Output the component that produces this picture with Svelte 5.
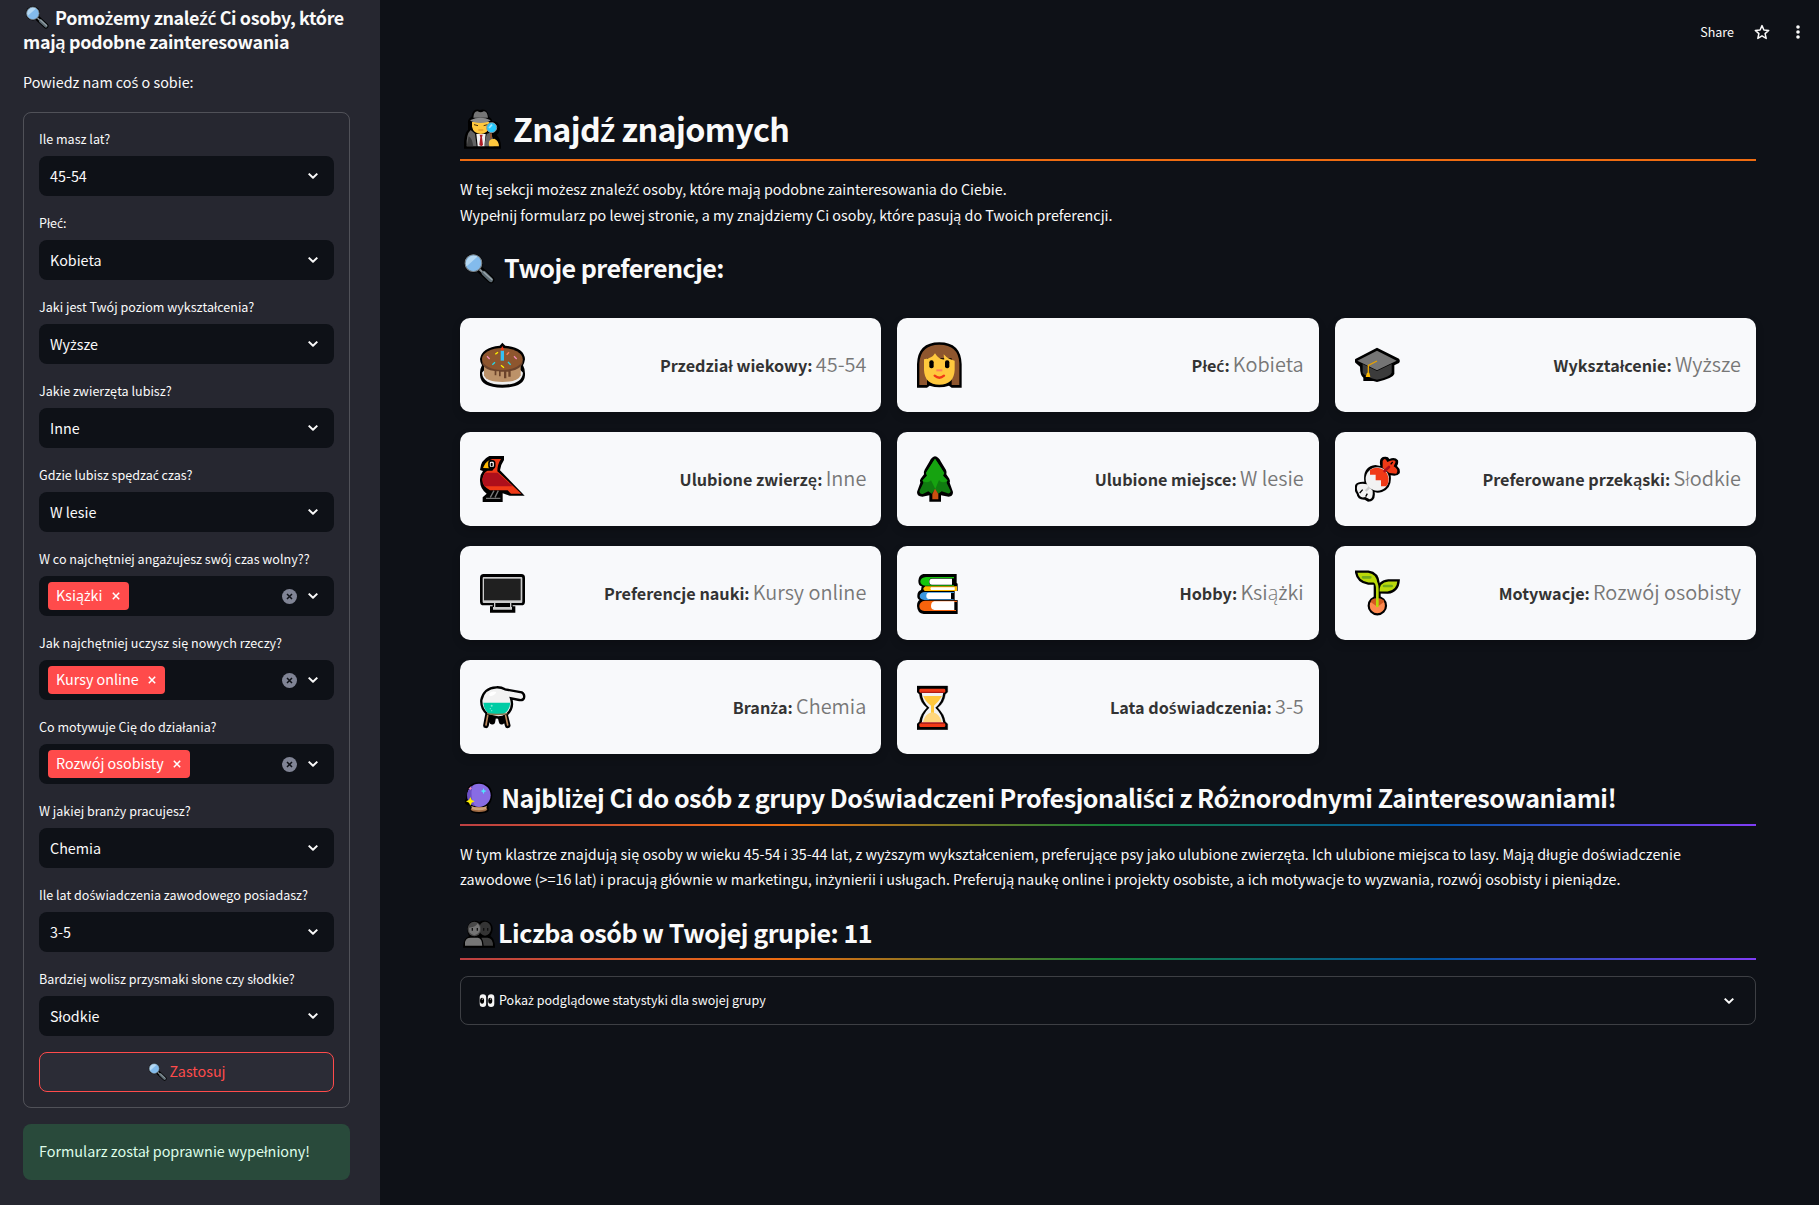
<script>
  const fields = [
    { label: 'Ile masz lat?', value: '45-54' },
    { label: 'Płeć:', value: 'Kobieta' },
    { label: 'Jaki jest Twój poziom wykształcenia?', value: 'Wyższe' },
    { label: 'Jakie zwierzęta lubisz?', value: 'Inne' },
    { label: 'Gdzie lubisz spędzać czas?', value: 'W lesie' },
    { label: 'W co najchętniej angażujesz swój czas wolny??', value: 'Książki', multi: true },
    { label: 'Jak najchętniej uczysz się nowych rzeczy?', value: 'Kursy online', multi: true },
    { label: 'Co motywuje Cię do działania?', value: 'Rozwój osobisty', multi: true },
    { label: 'W jakiej branży pracujesz?', value: 'Chemia' },
    { label: 'Ile lat doświadczenia zawodowego posiadasz?', value: '3-5' },
    { label: 'Bardziej wolisz przysmaki słone czy słodkie?', value: 'Słodkie' },
  ];
  const cards = [
    { icon: 'cake', box: '75 96 138 138', label: 'Przedział wiekowy:', value: '45-54' },
    { icon: 'woman', box: '82 96 138 138', label: 'Płeć:', value: 'Kobieta' },
    { icon: 'cap', box: '90 96 138 138', label: 'Wykształcenie:', value: 'Wyższe' },
    { icon: 'bird', box: '75 438 138 138', label: 'Ulubione zwierzę:', value: 'Inne' },
    { icon: 'tree', box: '82 438 138 138', label: 'Ulubione miejsce:', value: 'W lesie' },
    { icon: 'candy', box: '90 438 138 138', label: 'Preferowane przekąski:', value: 'Słodkie' },
    { icon: 'screen', box: '75 90 138 138', label: 'Preferencje nauki:', value: 'Kursy online' },
    { icon: 'books', box: '82 90 138 138', label: 'Hobby:', value: 'Książki' },
    { icon: 'sprout', box: '90 90 138 138', label: 'Motywacje:', value: 'Rozwój osobisty' },
    { icon: 'flask', box: '75 432 138 138', label: 'Branża:', value: 'Chemia' },
    { icon: 'glass', box: '82 432 138 138', label: 'Lata doświadczenia:', value: '3-5' },
  ];

  // The main family lacks these Polish letters, so they get their own family.
  const split = (text) => text.split(/([śźżćń])/).filter((s) => s !== '');
  const isAccent = (s) => /^[śźżćń]$/.test(s);
</script>

{#snippet pl(text)}<span>{#each split(text) as s}{#if isAccent(s)}<span class="acc">{s}</span>{:else}{s}{/if}{/each}</span>{/snippet}

{#snippet lens(cls)}
  <svg class={cls} viewBox="0 0 92 92">
    <circle cx="30" cy="32" r="27" fill="#000" />
    <path d="M50 52 L80 80" stroke="#000" stroke-width="20" stroke-linecap="round" />
    <path d="M48 50 L60 62" stroke="#8b9297" stroke-width="6" />
    <path d="M60 61 L80 80" stroke="#5c6a72" stroke-width="13" stroke-linecap="round" />
    <path d="M60 58 L83 79" stroke="#9aa5ab" stroke-width="4" stroke-linecap="round" />
    <circle cx="30" cy="32" r="24" fill="#83bbec" />
    <path d="M10 42 A23 23 0 0 1 42 13 Z" fill="#b5d9f4" />
    <circle cx="30" cy="32" r="24" fill="none" stroke="#7d868c" stroke-width="3" />
  </svg>
{/snippet}

{#snippet chevron()}
  <svg class="chev" viewBox="0 0 12 8"><path d="M1.7 1.6 L6 5.8 L10.3 1.6" fill="none" stroke="#fafafa" stroke-width="2" stroke-linejoin="round" /></svg>
{/snippet}

<div class="app">
  <aside>
    <h3>{@render lens('lens small')}{@render pl('Pomożemy znaleźć Ci osoby, które')}<br />mają podobne zainteresowania</h3>
    <p class="intro">{@render pl('Powiedz nam coś o sobie:')}</p>
    <form>
      {#each fields as f}
        <div class="field">
          <span class="label">{@render pl(f.label)}</span>
          <div class="select" class:multi={f.multi}>
            {#if f.multi}
              <span class="tag"><span class="tag-text">{@render pl(f.value)}</span><svg viewBox="0 0 8 8"><path d="M.8 .8 L7.2 7.2 M7.2 .8 L.8 7.2" stroke="#fff" stroke-width="1.5" /></svg></span>
              <svg class="clear" viewBox="0 0 15 15"><circle cx="7.5" cy="7.5" r="7.5" fill="#808495" /><path d="M5 5 L10 10 M10 5 L5 10" stroke="#0e1117" stroke-width="1.5" /></svg>
            {:else}
              <span class="value">{@render pl(f.value)}</span>
            {/if}
            {@render chevron()}
          </div>
        </div>
      {/each}
      <button type="button">{@render lens('lens tiny')}<span class="apply">Zastosuj</span></button>
    </form>
    <div class="alert">{@render pl('Formularz został poprawnie wypełniony!')}</div>
  </aside>

  <main>
    <div class="toolbar">
      <span>Share</span>
      <svg class="star" viewBox="0 0 16 16"><path d="M8 1.6 L9.9 6 L14.7 6.4 L11.1 9.6 L12.2 14.4 L8 11.8 L3.8 14.4 L4.9 9.6 L1.3 6.4 L6.1 6 Z" fill="none" stroke="#fafafa" stroke-width="1.5" stroke-linejoin="round" /></svg>
      <svg class="dots" viewBox="0 0 4 14"><circle cx="2" cy="2" r="1.8" /><circle cx="2" cy="7" r="1.8" /><circle cx="2" cy="12" r="1.8" /></svg>
    </div>

    <h1>
      <svg class="detective" viewBox="42 56 114 124">
        <path d="M56 101 Q54 90 66 84 Q68 58 90 64 Q112 58 115 84 Q126 90 124 98 Q148 96 148 118 Q146 132 137 136 Q152 150 151 176 H44 Q42 136 56 122 Z" fill="#000" stroke="#000" stroke-width="4" />
        <path d="M66 98 H118 V112 Q112 134 92 134 Q70 132 66 112 Z" fill="#ffc83d" />
        <path d="M72 106 l12 3 M113 106 l-12 3" stroke="#422b0d" stroke-width="3" />
        <path d="M85 122 H100" stroke="#e59829" stroke-width="4" />
        <path d="M70 85 Q72 64 83 66 Q92 72 101 66 Q111 64 114 85 Z" fill="#767676" />
        <path d="M60 93 Q92 78 122 93 Q112 101 92 101 Q70 101 60 93" fill="#8a8a8a" />
        <path d="M50 171 Q48 134 62 122 L75 133 L80 171Z" fill="#636363" />
        <path d="M50 171 L56 141 Q66 146 70 171Z" fill="#3a3a3a" />
        <path d="M102 171 L110 134 L119 130 Q132 142 131 171Z" fill="#636363" />
        <path d="M79 134 H107 L103 171 H83 Z" fill="#f1f1f1" />
        <path d="M89 136 H98 L96 144 L99 167 L94 171 L88 167 L91 144Z" fill="#ad1d25" />
        <circle cx="125" cy="115" r="15" fill="#26c9fc" stroke="#8b969c" stroke-width="3" />
        <path d="M117 116 L126 106" stroke="#a5e8ff" stroke-width="5" />
        <path d="M123 132 V148" stroke="#8c5533" stroke-width="6" />
        <path d="M118 171 Q113 154 124 150 L133 148 Q147 155 147 171 Z" fill="#ffc83d" />
      </svg>{@render pl('Znajdź znajomych')}
    </h1>
    <p class="lead">{@render pl('W tej sekcji możesz znaleźć osoby, które mają podobne zainteresowania do Ciebie.')}<br />{@render pl('Wypełnij formularz po lewej stronie, a my znajdziemy Ci osoby, które pasują do Twoich preferencji.')}</p>
    <h2 class="prefs">{@render lens('lens big')}Twoje preferencje:</h2>

    <div class="grid">
      {#each cards as c}
        <div class="card">
          <svg class="icon" viewBox={c.box}>
            {#if c.icon === 'cake'}
              <path d="M142 98 L151 107 Q208 112 210 148 Q208 160 204 166 Q211 178 210 196 Q208 233 142 233 Q77 233 75 196 Q74 178 81 166 Q75 156 75 147 Q80 112 134 107 Z" fill="#000" />
              <path d="M81 188 Q84 224 142 224 Q201 224 204 188 L196 180 H88 Z" fill="#efefef" />
              <path d="M87 166 H197 V196 Q190 216 142 216 Q94 216 87 196Z" fill="#bc9269" />
              <path d="M82 147 V162 Q90 180 119 183 V196 H124 V184 H132 V199 H137 V185 H147 V205 H154 V185 H160 V200 H167 V183 Q196 179 203 160 V147Z" fill="#6b432b" />
              <ellipse cx="142" cy="147" rx="61" ry="33" fill="#8e562e" />
              <path d="M137 122 H147 V152 H137Z" fill="#35c1f1" />
              <path d="M142 108 L147 118 Q142 126 137 118Z" fill="#f03a17" />
              <g stroke-width="4"><path d="M121 133 L129 127 M138 166 L147 173" stroke="#fff100" /><path d="M155 134 L162 127" stroke="#ff8257" /><path d="M96 139 L104 147 M177 139 L185 147" stroke="#f48ab8" /><path d="M112 164 L120 157 M159 156 L167 164" stroke="#27d6e8" /></g>
            {:else if c.icon === 'woman'}
              <path d="M82 233 V163 Q84 97 149 97 Q214 97 216 163 V233 H186 L178 227 Q149 236 120 227 L112 233 Z" fill="#000" />
              <path d="M89 225 V160 Q92 104 149 104 Q207 104 209 160 V225 H186 V145 H112 V225Z" fill="#8e562e" />
              <path d="M103 148 Q128 145 136 130 Q148 150 164 148 Q162 140 162 133 Q176 149 195 152 V180 Q193 224 149 224 Q105 224 103 180Z" fill="#ffc83d" />
              <rect x="119" y="151" width="13" height="24" rx="6" /><rect x="166" y="151" width="13" height="24" rx="6" />
              <path d="M140 181 H158" stroke="#ff8257" stroke-width="6" />
              <path d="M135 197 Q149 209 163 197" fill="none" stroke="#f03a17" stroke-width="7" stroke-linecap="round" />
            {:else if c.icon === 'cap'}
              <path d="M156 113 L222 146 Q227 153 222 159 L208 166 V192 Q205 204 156 216 L145 213 H115 V203 Q105 196 105 170 L91 158 Q87 152 91 147 Z" fill="#000" />
              <path d="M113 162 L156 183 L200 162 V188 Q196 200 156 209 Q120 200 113 188Z" fill="#3b3b3b" />
              <path d="M156 122 L215 152 L156 181 L97 152Z" fill="#757575" />
              <path d="M156 153 L130 166 V192" fill="none" stroke="#e8a200" stroke-width="4" /><path d="M126 188 H133 L136 201 H122Z" fill="#ffb900" />
            {:else if c.icon === 'bird'}
              <path d="M75 480 Q77 450 103 438 H147 V450 Q136 466 135 481 L209 557 H164 L143 550 V576 H83 V562 L95 551 Q74 536 75 508 Q76 492 84 483Z" fill="#000" />
              <path d="M84 474 Q90 458 103 451 V475Z" fill="#ffb900" />
              <path d="M105 447 H138 Q127 463 127 484 L199 551 H168 L158 541 H105 Q82 529 82 508 Q86 486 98 482 H112 L119 473 V453Z" fill="#f03a17" />
              <path d="M92 488 H128 L173 529 H88 Q79 509 86 495Z" fill="#ae0f1b" />
              <rect x="102" y="453" width="17" height="20" rx="6" fill="#fff" stroke="#000" stroke-width="5" /><rect x="107" y="458" width="6" height="11" rx="3" />
              <path d="M117 542 L106 562 M130 542 L120 562 M93 565 H136" stroke="#777" stroke-width="4" />
            {:else if c.icon === 'tree'}
              <path d="M136 439 Q147 441 154 455 L169 480 Q172 487 170 493 L179 506 Q182 512 180 518 L190 546 Q190 560 177 560 L154 556 V575 H119 V556 L98 560 Q82 560 82 546 L92 518 Q89 511 93 506 L103 493 Q101 486 105 479 L119 455 Q127 440 136 439Z" fill="#000" />
              <path d="M136 446 L151 469 L163 489 L160 497 L173 511 L171 519 L183 544 Q181 554 170 548 L156 544 L146 551 L136 540 L126 551 L116 544 L101 551 Q90 554 89 544 L101 519 L99 511 L112 497 L109 489Z" fill="#107c10" />
              <path d="M136 446 L164 489 L160 497 L174 512 Q156 522 148 510 L137 537 L124 511 Q114 522 98 512 L112 497 L109 488Z" fill="#16a310" />
              <path d="M136 536 L146 552 V568 H128 V552Z" fill="#ca5010" />
            {:else if c.icon === 'candy'}
              <path d="M166 468 Q160 440 180 440 Q190 439 193 447 Q210 440 219 451 Q221 462 216 468 Q227 477 224 490 Q218 500 197 496 Q202 534 171 546 Q157 550 149 546 Q153 574 129 575 L119 569 Q97 570 95 552 Q84 537 92 523 Q98 514 118 515 Q112 470 151 465Z" fill="#000" />
              <circle cx="157" cy="507" r="35" fill="#f2f2f2" />
              <path d="M135 480 A35 35 0 0 1 184 529 H168 V511 H152 V494 H135Z" fill="#f03a17" />
              <path d="M173 474 V453 Q180 440 187 456 Q207 446 212 455 L206 469 Q223 479 214 491 L193 489Z" fill="#f03a17" />
              <path d="M179 483 L192 471" stroke="#ae0f1b" stroke-width="8" stroke-linecap="round" />
              <path d="M126 523 L143 542 Q145 564 134 568 L121 561 Q104 566 101 550 Q92 537 98 524 Q110 519 126 523Z" fill="#f2f2f2" /><path d="M122 543 L133 532" stroke="#ccc" stroke-width="7" /><path d="M104 549 L113 539 M122 560 L127 551 M203 456 L197 463" stroke="#000" stroke-width="4" />
            {:else if c.icon === 'screen'}
              <rect x="75" y="102" width="135" height="94" rx="11" /><path d="M105 218 V199 H113 V190 H173 V199 H181 V218Z" />
              <rect x="83" y="111" width="119" height="78" rx="3" fill="#ccc" /><rect x="87" y="116" width="110" height="65" fill="#202020" />
              <path d="M114 201 H171 V209 H114Z M117 189 H121 V203 H117Z M165 189 H169 V203 H165Z" fill="#ccc" />
            {:else if c.icon === 'books'}
              <path d="M101 102 H201 V129 L204 131 V153 H195 V180 H204 V222 H102 Q83 220 82 198 Q82 184 90 180 Q82 177 83 166 Q84 153 94 150 L96 139 Q86 137 86 122 Q88 104 101 102Z" />
              <path d="M109 111 H193 V115 H127 Q118 116 118 126 Q118 135 127 135 H193 V137 H107 Q92 136 92 124 Q94 112 109 111Z" fill="#16c60c" />
              <path d="M127 116 H187 V134 H127 Q119 134 119 125 Q119 116 127 116Z" fill="#fff" />
              <path d="M107 139 H202 V153 H105 Q96 146 107 139Z" fill="#ffb900" /><path d="M124 142 H195 V150 H124 Q120 146 124 142Z" fill="#fff" />
              <path d="M106 156 H193 V159 H118 V178 H192 V180 H104 Q90 178 90 167 Q92 157 106 156Z" fill="#3a96dd" />
              <path d="M118 158 H184 V177 H118 Q109 176 110 167 Q110 158 118 158Z" fill="#fff" />
              <path d="M106 182 H202 V186 H132 V210 H199 V213 H104 Q89 211 89 198 Q90 184 106 182Z" fill="#f7630c" />
              <path d="M134 184 H194 V210 H134 Q124 208 124 197 Q125 185 134 184Z" fill="#fff" />
            {:else if c.icon === 'sprout'}
              <circle cx="157" cy="197" r="26" fill="#ff8a50" stroke="#000" stroke-width="6.5" />
              <path d="M156 175 Q181 178 177 186 L157 200 L137 186 Q140 175 156 175Z" fill="#d25a22" />
              <path d="M146 175 V131 H167 V175Z" />
              <path d="M93 95 H130 Q159 99 161 131 H130 Q97 126 93 95Z" fill="#bad80a" stroke="#000" stroke-width="7" />
              <path d="M160 157 Q158 124 190 121 H221 Q219 154 188 158Z" fill="#bad80a" stroke="#000" stroke-width="7" />
              <path d="M157 198 V150 Q158 128 145 120" fill="none" stroke="#bad80a" stroke-width="8" stroke-linecap="round" />
              <path d="M114 112 H136 M177 138 H200" stroke="#72aa1c" stroke-width="8" stroke-linecap="round" />
            {:else if c.icon === 'flask'}
              <path d="M99 524 L93 556 M150 524 L158 556 M115 528 L112 545 M136 528 L140 545" stroke="#000" stroke-width="17" stroke-linecap="round" />
              <path d="M124 442 Q138 441 150 448 L200 457 Q210 463 207 474 Q204 482 193 480 L168 475 Q178 504 155 524 Q130 542 97 522 Q77 506 79 480 Q86 444 124 442Z" fill="#f2f2f2" stroke="#000" stroke-width="7" />
              <path d="M85 488 H166 Q164 513 143 524 H106 Q87 512 85 488Z" fill="#00cca5" />
              <path d="M102 462 Q109 452 124 456 Q119 467 105 469Z" fill="#fff" />
              <path d="M98 527 L93 555 M152 527 L158 555" stroke="#bc8a5e" stroke-width="5" stroke-linecap="round" />
              <path d="M96 521 Q126 526 157 521" fill="none" stroke="#8d764f" stroke-width="4" />
              <g fill="#7cebd3"><circle cx="110" cy="497" r="3" /><circle cx="106" cy="506" r="2" /><circle cx="110" cy="512" r="2" /></g>
            {:else if c.icon === 'glass'}
              <path d="M82 438 H174 V456 L167 463 Q164 489 144 503 Q164 523 167 545 L174 552 V569 H82 V552 L89 545 Q92 522 112 503 Q92 489 89 463 L82 456Z" stroke="#000" stroke-linejoin="round" />
              <path d="M96 457 H161 Q158 487 137 503 Q158 523 161 550 H96 Q98 522 119 503 Q98 487 96 457Z" fill="#f2f2f2" />
              <path d="M101 468 H157 Q150 482 133 497 V519 H124 V497 Q105 483 101 468Z" fill="#ffc83d" />
              <path d="M100 546 Q106 521 128 517 Q150 521 156 546Z" fill="#ffd67d" />
              <rect x="89" y="446" width="78" height="12" rx="4" fill="#f03a17" /><rect x="89" y="550" width="78" height="11" rx="4" fill="#f03a17" />
              <path d="M94 457 H162 M94 549 H162" stroke="#ae1a16" stroke-width="4" />
            {/if}
          </svg>
          <div class="text"><b>{@render pl(c.label)}</b> <span class="val">{@render pl(c.value)}</span></div>
        </div>
      {/each}
    </div>

    <h2 class="ruled group">
      <svg class="orb" viewBox="42 37 88 96">
        <path d="M62 108 Q42 108 45 92 Q49 84 50 76 L54 54 Q66 38 88 38 Q126 42 127 76 Q126 98 115 106 L117 122 Q113 132 87 132 Q63 132 61 122Z" fill="#000" />
        <ellipse cx="87" cy="119" rx="25" ry="8" fill="#a36d45" /><path d="M64 109 Q87 120 111 109 L108 119 Q87 125 66 119Z" fill="#cda178" />
        <circle cx="87" cy="77" r="35" fill="#886ce4" /><path d="M68 48 Q58 84 76 110 Q50 104 52 72 Q56 54 68 48" fill="#6c4fc4" />
        <path d="M101 55 L103 62 L110 64 L103 67 L101 74 L98 67 L92 64 L98 62Z" fill="#50e6ff" />
        <path d="M61 82 L65 91 L74 95 L65 99 L61 108 L57 99 L48 95 L57 91Z" fill="#fff100" />
        <path d="M61 50 L63 54 L67 56 L63 58 L61 62 L59 58 L55 56 L59 54Z" fill="#e88ab5" />
      </svg>{@render pl('Najbliżej Ci do osób z grupy Doświadczeni Profesjonaliści z Różnorodnymi Zainteresowaniami!')}
    </h2>
    <p class="desc">{@render pl('W tym klastrze znajdują się osoby w wieku 45-54 i 35-44 lat, z wyższym wykształceniem, preferujące psy jako ulubione zwierzęta. Ich ulubione miejsca to lasy. Mają długie doświadczenie')}<br />{@render pl('zawodowe (>=16 lat) i pracują głównie w marketingu, inżynierii i usługach. Preferują naukę online i projekty osobiste, a ich motywacje to wyzwania, rozwój osobisty i pieniądze.')}</p>
    <h2 class="ruled count">
      <svg class="people" viewBox="39 454 96 84">
        <path d="M39 537 Q40 509 57 503 Q45 475 62 460 Q76 452 88 460 Q104 450 122 463 Q135 480 121 502 Q135 510 135 537Z" fill="#000" />
        <ellipse cx="105" cy="480" rx="18" ry="21" fill="#343434" /><ellipse cx="73" cy="481" rx="20" ry="22" fill="#484848" />
        <path d="M57 477 Q76 477 83 464 Q94 478 88 490 Q73 509 58 491Z" fill="#747474" />
        <path d="M67 478 v8 M82 478 v8 M101 478 v8 M113 478 v8" stroke="#111" stroke-width="4" />
        <path d="M45 531 V520 Q48 507 62 507 H84 Q96 508 97 531Z" fill="#767676" /><path d="M101 531 Q101 516 94 507 H113 Q129 509 129 531Z" fill="#3d3d3d" />
      </svg>Liczba osób w Twojej grupie: 11
    </h2>

    <div class="expander">
      <svg class="eyes" viewBox="86 673 47 40">
        <rect x="88" y="674" width="19" height="37" rx="9.5" fill="#f5f5f5" /><rect x="112" y="674" width="19" height="37" rx="9.5" fill="#f5f5f5" />
        <ellipse cx="95" cy="693" rx="6" ry="9" /><ellipse cx="119" cy="693" rx="6" ry="9" /><circle cx="96" cy="688" r="2" fill="#ccc" /><circle cx="120" cy="688" r="2" fill="#ccc" />
      </svg>
      <span class="summary">{@render pl('Pokaż podglądowe statystyki dla swojej grupy')}</span>
      {@render chevron()}
    </div>
  </main>
</div>

<style>
  :global(body) { margin: 0; background: #0e1117; }
  .app {
    display: flex; height: 1205px; overflow: hidden; color: #fafafa;
    font-family: "Noto Sans CJK JP", "Open Sans", sans-serif; font-size: 14.34px;
  }
  aside, main, .app * { box-sizing: border-box; }
  h1, h2, h3, p { margin: 0; white-space: nowrap; }
  h1, h2, h3 { letter-spacing: -.019em; font-weight: 600; }
  svg { flex: none; }
  .acc { font-family: "Open Sans", "Noto Sans", sans-serif; line-height: 0; }
  aside { flex: none; width: 380px; background: #262730; padding: 5px 30px 0 23px; }
  h3 { font-size: 17.9px; line-height: 24px; height: 48px; }
  .small { width: 24px; height: 24px; margin: 0 6px 0 2px; vertical-align: -4px; }
  .tiny { width: 19px; height: 19px; margin: 0 2px 1px 1px; }
  .big { width: 32px; height: 32px; margin: 2px 9px 0 3px; }
  .intro { margin-top: 16px; line-height: 26px; }
  form { margin-top: 17px; border: 1px solid rgba(250, 250, 250, .2); border-radius: 8px; padding: 15px; display: flex; flex-direction: column; gap: 16px; }
  .field { display: flex; flex-direction: column; }
  .label { font-size: 12.56px; line-height: 22px; height: 28px; white-space: nowrap; }
  .select { height: 40px; background: #0e1117; border-radius: 8px; display: flex; align-items: center; padding: 0 15px 0 11px; }
  .tag-text, .apply, .summary { line-height: 22px; padding-bottom: 2px; }
  .value { line-height: 22px; }
  .select .chev { margin-left: auto; }
  .multi { padding-left: 9px; }
  .multi .clear { margin-left: auto; }
  .multi .chev { margin-left: 10.5px; }
  .chev { width: 12px; height: 8px; }
  .tag { background: #ff4b4b; border-radius: 4px; height: 28px; padding: 0 9px 0 8px; display: flex; align-items: center; gap: 9.5px; white-space: nowrap; color: #fff; }
  .tag svg { width: 8px; height: 8px; }
  .clear { width: 15px; height: 15px; }
  button { height: 40px; border: 1px solid #ff4b4b; border-radius: 8px; background: #2b2c36; color: #ff4b4b; font: inherit; display: flex; align-items: center; justify-content: center; padding: 0; }
  .alert { margin-top: 16px; height: 56px; border-radius: 8px; background: #294a3b; color: #dffde9; padding: 0 16px 2px; display: flex; align-items: center; line-height: 24px; font-size: 14.4px; }

  main { flex: 1; min-width: 0; padding: 0 63px 0 80px; }
  .toolbar { height: 106px; margin-right: -44px; padding-top: 21px; display: flex; justify-content: flex-end; align-items: flex-start; font-size: 12.54px; line-height: 22px; }
  .star { width: 16px; height: 16px; margin: 3px 0 0 20px; }
  .dots { width: 4px; height: 14px; margin: 4px 0 0 26px; fill: #fafafa; }
  h1 { font-size: 32.25px; line-height: 44px; height: 55px; padding-bottom: 9px; border-bottom: 2px solid #ef6c11; display: flex; align-items: center; }
  .detective { width: 38px; height: 41.3px; margin: 2px 11px 0 4px; }
  .lead { margin-top: 15px; line-height: 26px; }
  h2 { font-size: 25.1px; line-height: 36px; display: flex; align-items: center; }
  .prefs { margin-top: 21px; height: 36px; letter-spacing: -.022em; }
  .grid { margin-top: 33px; display: grid; grid-template-columns: repeat(3, 1fr); column-gap: 16px; row-gap: 20px; }
  .card { height: 94px; border-radius: 10px; background: #f8f9fb; box-shadow: 0 4px 8px rgba(0, 0, 0, .2); padding: 0 15px 0 20px; display: flex; align-items: center; justify-content: space-between; }
  .icon { width: 46px; height: 46px; }
  .text { white-space: nowrap; line-height: 30px; }
  .text b { font-size: 16.2px; color: #333; font-weight: 600; }
  .val { font-size: 19.9px; font-weight: 350; color: #777; }
  .val .acc { font-weight: 400; }
  .ruled { border-bottom: 2px solid; border-image: linear-gradient(to right, #bd4043, #ec6c10, #158237, #0054a3, #803df5) 1; }
  .group { margin-top: 25px; height: 47px; padding-bottom: 9px; }
  .orb { width: 29.3px; height: 32px; margin: 2px 8px 0 4px; }
  .desc { margin-top: 15px; line-height: 25px; }
  .count { margin-top: 23px; height: 46px; padding-bottom: 8px; }
  .people { width: 32px; height: 28px; margin: 3px 3px 0; }
  .expander { margin-top: 16px; height: 49px; border: 1px solid rgba(250, 250, 250, .2); border-radius: 8px; padding: 0 20px 0 18px; display: flex; align-items: center; font-size: 12.54px; }
  .eyes { width: 16px; height: 13.6px; margin-right: 4px; }
  .expander .chev { margin-left: auto; }
</style>
